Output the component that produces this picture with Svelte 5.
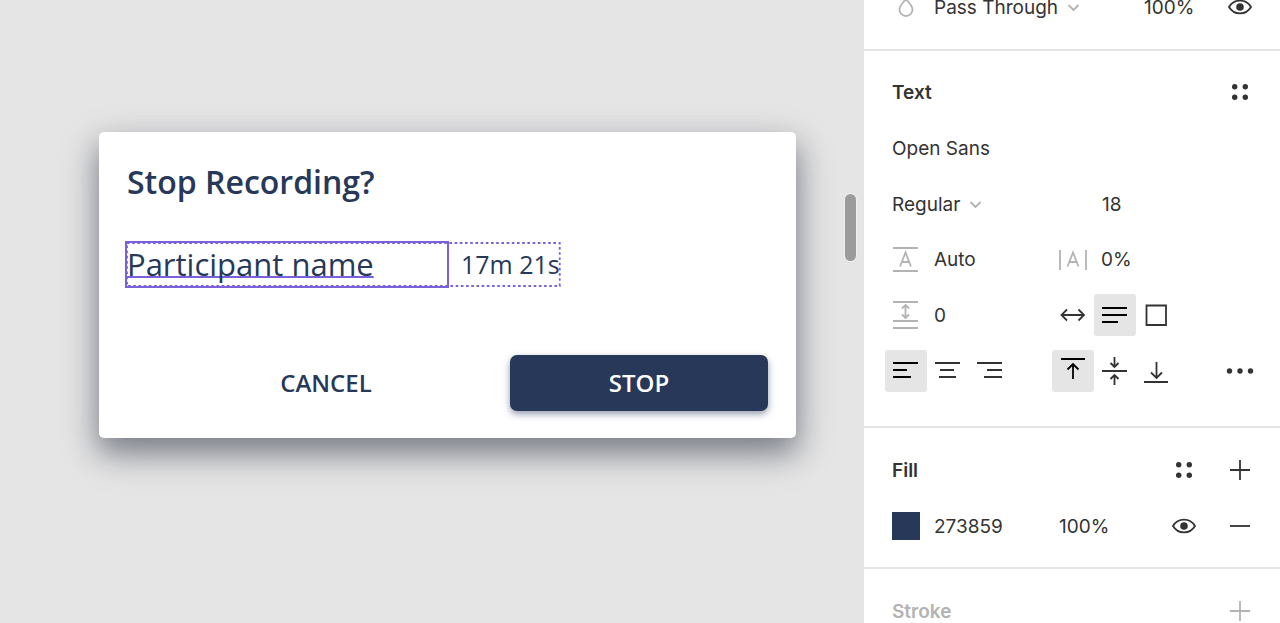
<script>
  let blendMode = $state('Pass Through');
  let layerOpacity = $state('100%');

  let fontFamily = $state('Open Sans');
  let fontWeight = $state('Regular');
  let fontSize = $state('18');
  let lineHeight = $state('Auto');
  let letterSpacing = $state('0%');
  let paragraphSpacing = $state('0');

  let resize = $state('height');
  let align = $state('left');
  let valign = $state('top');

  let fillColor = $state('273859');
  let fillOpacity = $state('100%');

  // all icons are drawn on a 42x42 grid
  const resizeOptions = [
    { id: 'width', label: 'Auto width', d: 'M9.500 21h22.500M15 15.500l-5.500 5.500l5.500 5.500M26.500 15.500l5.500 5.500l-5.500 5.500' },
    { id: 'height', label: 'Auto height', d: 'M8 14h25M8 21h25M8 28h16' },
    { id: 'fixed', label: 'Fixed size', d: 'M10.500 11.500h19.500v19.500h-19.500z' }
  ];
  const alignOptions = [
    { id: 'left', label: 'Align left', d: 'M8 13h25M8 20h14M8 27h18' },
    { id: 'center', label: 'Align center', d: 'M8 13h25M13 20h14M12 27h17' },
    { id: 'right', label: 'Align right', d: 'M8 13h25M18 20h15M15 27h18' }
  ];
  const valignOptions = [
    { id: 'top', label: 'Align top', d: 'M9 9h24M21 29v-15M15.500 19.500l5.500 -5.500l5.500 5.500' },
    { id: 'middle', label: 'Align middle', d: 'M8 21h25M20.500 7v10M16.500 13l4 4l4 -4M20.500 35v-10M16.500 29l4 -4l4 4' },
    { id: 'bottom', label: 'Align bottom', d: 'M8 32h24M20.500 12v16M15 22.500l5.500 5.500l5.500 -5.500' }
  ];
</script>

{#snippet eye()}
  <svg viewBox="0 0 42 42">
    <path d="M10 21c5-8.500 17-8.500 22 0c-5 8.500-17 8.500-22 0z" />
    <circle class="solid" cx="21" cy="21" r="3.800" />
  </svg>
{/snippet}

{#snippet dots()}
  <svg viewBox="0 0 42 42">
    <circle class="solid" cx="15.700" cy="15.700" r="2.700" />
    <circle class="solid" cx="26.300" cy="15.700" r="2.700" />
    <circle class="solid" cx="15.700" cy="26.300" r="2.700" />
    <circle class="solid" cx="26.300" cy="26.300" r="2.700" />
  </svg>
{/snippet}

{#snippet chevron()}
  <svg class="chevron" viewBox="0 0 14 14"><path d="M1.500 5l5 5l5-5" /></svg>
{/snippet}

{#snippet toggles(options, current, pick)}
  {#each options as option}
    <button
      class="icon-button"
      class:active={option.id === current}
      aria-label={option.label}
      aria-pressed={option.id === current}
      onclick={() => pick(option.id)}
    >
      <svg viewBox="0 0 42 42"><path d={option.d} /></svg>
    </button>
  {/each}
{/snippet}

<div class="editor">
  <main class="canvas">
    <section class="dialog">
      <h1>Stop Recording?</h1>
      <div class="details">
        <span class="name"><span class="name-text">Participant name</span></span>
        <span class="duration">17m 21s</span>
        <svg class="frame-outline"><rect width="100%" height="100%" /></svg>
      </div>
      <div class="actions">
        <button class="action">CANCEL</button>
        <button class="action primary">STOP</button>
      </div>
    </section>
    <div class="scroll-thumb"></div>
  </main>

  <aside class="panel">
    <!-- layer -->
    <section class="layer">
      <div class="row">
        <svg class="icon muted" viewBox="0 0 42 42">
          <path d="M21 13c3 4 6.500 6.500 6.500 10.500a6.500 6.500 0 0 1-13 0c0-4 3.500-6.500 6.500-10.500z" />
        </svg>
        <div class="pick grow">
          <select aria-label="Blend mode" bind:value={blendMode}>
            <option>Pass Through</option>
          </select>
          {@render chevron()}
        </div>
        <input class="opacity" aria-label="Layer opacity" bind:value={layerOpacity} />
        <button class="icon-button" aria-label="Toggle layer">{@render eye()}</button>
      </div>
    </section>

    <!-- text -->
    <section class="text">
      <div class="row">
        <h2>Text</h2>
        <button class="icon-button" aria-label="Text styles">{@render dots()}</button>
      </div>
      <div class="row">
        <input class="grow" aria-label="Font family" bind:value={fontFamily} />
      </div>
      <div class="row">
        <div class="half pick">
          <select aria-label="Font weight" bind:value={fontWeight}>
            <option>Regular</option>
          </select>
          {@render chevron()}
        </div>
        <input class="size" aria-label="Font size" bind:value={fontSize} />
      </div>
      <div class="row compact">
        <label class="half">
          <svg class="icon muted" viewBox="0 0 42 42" aria-label="Line height">
            <path d="M8 9h25M8 32h25M15 27.500l5.500-14l5.500 14M17 23h7" />
          </svg>
          <input bind:value={lineHeight} />
        </label>
        <label class="half">
          <svg class="icon muted" viewBox="0 0 42 42" aria-label="Letter spacing">
            <path d="M8 11v20M34 11v20M15.500 27.500l5.500-14l5.500 14M17.500 23h7" />
          </svg>
          <input bind:value={letterSpacing} />
        </label>
      </div>
      <div class="row">
        <label class="half">
          <svg class="icon muted" viewBox="0 0 42 42" aria-label="Paragraph spacing">
            <path d="M8 8h25M8 27h25M8 34h25M20.500 12v11M17 14.500l3.500-3.500l3.500 3.500M17 20.500l3.500 3.500l3.500-3.500" />
          </svg>
          <input bind:value={paragraphSpacing} />
        </label>
        {@render toggles(resizeOptions, resize, (id) => (resize = id))}
      </div>
      <div class="row">
        <div class="half">
          {@render toggles(alignOptions, align, (id) => (align = id))}
        </div>
        <div class="group">
          {@render toggles(valignOptions, valign, (id) => (valign = id))}
        </div>
        <button class="icon-button" aria-label="More options">
          <svg viewBox="0 0 42 42">
            <circle class="solid" cx="10.500" cy="21" r="2.700" />
            <circle class="solid" cx="21" cy="21" r="2.700" />
            <circle class="solid" cx="31.500" cy="21" r="2.700" />
          </svg>
        </button>
      </div>
    </section>

    <!-- fill -->
    <section>
      <div class="row">
        <h2>Fill</h2>
        <div class="buttons">
          <button class="icon-button" aria-label="Fill styles">{@render dots()}</button>
          <button class="icon-button" aria-label="Add fill">
            <svg viewBox="0 0 42 42"><path d="M11 21h20M21 11v20" /></svg>
          </button>
        </div>
      </div>
      <div class="row">
        <div class="half">
          <button class="swatch" aria-label="Pick fill color" style:background-color="#{fillColor}"></button>
          <input aria-label="Fill color" bind:value={fillColor} />
        </div>
        <input class="grow" aria-label="Fill opacity" bind:value={fillOpacity} />
        <div class="buttons">
          <button class="icon-button" aria-label="Toggle fill">{@render eye()}</button>
          <button class="icon-button" aria-label="Remove fill">
            <svg viewBox="0 0 42 42"><path d="M11 21h20" /></svg>
          </button>
        </div>
      </div>
    </section>

    <!-- stroke -->
    <section class="empty">
      <div class="row">
        <h2>Stroke</h2>
        <button class="icon-button" aria-label="Add stroke">
          <svg viewBox="0 0 42 42"><path d="M11 21h20M21 11v20" /></svg>
        </button>
      </div>
    </section>
  </aside>
</div>

<style>
  :global(body) {
    margin: 0;
  }
  .editor {
    display: flex;
    height: 100vh;
    overflow: hidden;
    font-family: Inter, 'Liberation Sans', sans-serif;
    font-size: 19px;
    line-height: 29px;
    color: #333;
  }
  button,
  input,
  select {
    box-sizing: border-box;
    margin: 0;
    padding: 0;
    border: 0;
    background: none;
    font: inherit;
    color: inherit;
  }
  svg {
    display: block;
    fill: none;
    stroke: currentColor;
    stroke-width: 1.8;
  }
  .solid {
    fill: currentColor;
    stroke: none;
  }

  /* canvas */
  .canvas {
    position: relative;
    box-sizing: border-box;
    flex: 1;
    min-width: 0;
    padding: 132px 68px 0 99px;
    background: #e5e5e5;
    font-family: 'Open Sans', sans-serif;
    color: #273859;
  }
  .dialog {
    padding: 28px 28px 27px;
    border-radius: 5px;
    background: #fff;
    box-shadow: 0 14px 42px rgba(40, 50, 70, 0.25), 0 14px 28px rgba(30, 32, 48, 0.4);
  }
  h1 {
    margin: 0;
    font-size: 32px;
    font-weight: 600;
    line-height: 44px;
  }
  .details {
    position: relative;
    display: flex;
    width: fit-content;
    height: 43px;
    margin-top: 39px;
    line-height: 42px;
  }
  .name {
    width: 320px;
    font-size: 31px;
    outline: 2px solid #7b61d9;
  }
  .name-text {
    text-decoration: underline 2px #7b61d9;
    text-decoration-skip-ink: none;
    text-underline-offset: 0;
  }
  .duration {
    padding-left: 14px;
    font-size: 25px;
  }
  .frame-outline {
    position: absolute;
    inset: 0;
    width: 100%;
    height: 100%;
    overflow: visible;
    stroke: #7b61d9;
    stroke-dasharray: 2.6 2.6;
  }
  .actions {
    display: flex;
    justify-content: flex-end;
    gap: 55px;
    margin-top: 69px;
  }
  .action {
    width: 258px;
    height: 56px;
    padding-bottom: 2px;
    border-radius: 7px;
    font-size: 24px;
    font-weight: 600;
  }
  .primary {
    background: #273859;
    color: #fff;
    box-shadow: 0 3px 7px rgba(39, 56, 89, 0.5);
  }
  .scroll-thumb {
    position: absolute;
    top: 194px;
    right: 8px;
    width: 11px;
    height: 67px;
    border-radius: 6px;
    background: #9b9b9b;
    box-shadow: 0 0 0 1px #eee;
  }

  /* properties panel */
  .panel {
    flex: none;
    width: 416px;
    background: #fff;
  }
  .panel section {
    padding: 14px 19px 13px 21px;
    border-bottom: 2px solid #e5e5e5;
  }
  /* scrolled partly out of view */
  .panel .layer {
    margin-top: -35px;
    padding-bottom: 14px;
  }
  .panel .text {
    padding-top: 13px;
    padding-bottom: 27px;
  }
  .panel .empty {
    border-bottom: 0;
    color: #b3b3b3;
  }
  .row {
    display: flex;
    align-items: center;
    height: 56px;
  }
  .compact {
    height: 55px;
  }
  .half {
    display: flex;
    align-items: center;
    flex: none;
    width: 167px;
  }
  .group {
    display: flex;
    flex: 1;
  }
  .buttons {
    display: flex;
    gap: 14px;
  }
  .grow {
    flex: 1;
  }
  h2 {
    flex: 1;
    margin: 0;
    padding-left: 7px;
    font-size: 19px;
    font-weight: 600;
    line-height: 29px;
  }
  input {
    min-width: 0;
    width: 100%;
    height: 29px;
    padding-left: 7px;
  }
  .opacity {
    flex: none;
    width: 82px;
  }
  .size {
    padding-left: 50px;
  }
  .pick {
    display: flex;
    align-items: center;
    gap: 8px;
    box-sizing: border-box;
    padding-left: 7px;
  }
  select {
    appearance: none;
    height: 29px;
  }
  .chevron {
    width: 14px;
    height: 14px;
    color: #b3b3b3;
  }
  .icon,
  .icon-button {
    flex: none;
    width: 42px;
    height: 42px;
  }
  .muted {
    color: #b3b3b3;
  }
  .icon-button {
    border-radius: 3px;
  }
  .active {
    background: #e5e5e5;
    color: #000;
  }
  .swatch {
    flex: none;
    width: 28px;
    height: 28px;
    margin: 0 7px;
  }
</style>
